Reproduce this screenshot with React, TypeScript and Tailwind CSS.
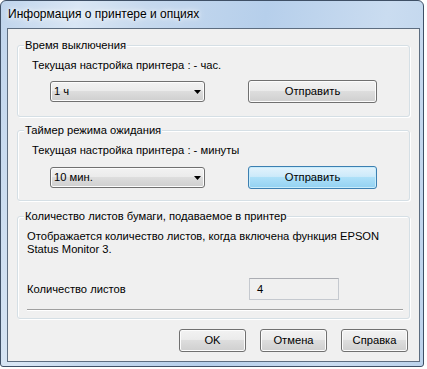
import React from "react";

const font = "font-['Liberation_Sans',Arial,sans-serif] text-[11.2px] text-black";

function Btn({ children, w, focused = false }: { children: React.ReactNode; w: string; focused?: boolean }) {
  const base =
    "h-[23px] rounded-[3px] border flex items-center justify-center leading-[13px] " + w + " ";
  const normal =
    "border-[#707070] bg-[linear-gradient(180deg,#f2f2f2_0%,#ebebeb_45%,#dddddd_50%,#cfcfcf_100%)] shadow-[inset_0_0_0_1px_#fcfcfc]";
  const blue =
    "border-[#3c7fb1] bg-[linear-gradient(180deg,#e3f3fc_0%,#cdeafa_45%,#ade0f8_50%,#93d1f2_100%)] shadow-[inset_0_0_0_1px_#c8ecfb]";
  return <div className={base + (focused ? blue : normal)}>{children}</div>;
}

function Combo({ value }: { value: string }) {
  return (
    <div className="w-[155px] h-[21px] rounded-[3px] border border-[#707070] bg-[linear-gradient(180deg,#f2f2f2_0%,#ebebeb_45%,#dddddd_50%,#cfcfcf_100%)] shadow-[inset_0_0_0_1px_#fcfcfc] flex items-center justify-between pl-[3px] pr-[3px]">
      <span className="leading-[13px]">{value}</span>
      <svg width="7" height="4" viewBox="0 0 7 4">
        <polygon points="0,0 7,0 3.5,4" fill="#000" />
      </svg>
    </div>
  );
}

function Group({
  label,
  h,
  children,
}: {
  label: string;
  h: string;
  children: React.ReactNode;
}) {
  return (
    <div
      className={
        "relative w-[393px] rounded-[3px] border border-[#d5dfe5] shadow-[inset_1px_1px_0_#ffffff,1px_1px_0_#ffffff] " +
        h
      }
    >
      <span className="absolute left-[6px] -top-[8px] px-[1px] bg-[#f0f0f0] leading-[14px] whitespace-nowrap">
        {label}
      </span>
      {children}
    </div>
  );
}

export default function App() {
  return (
    <div className={"w-[427px] h-[369px] bg-white " + font}>
      <div className="w-[424px] h-[367px] rounded-t-[6px] rounded-b-[3px] border border-[#3f5066] bg-[linear-gradient(100deg,#bfd4ec_0%,#d9e6f4_16%,#c6d9ee_30%,#b6cfeb_55%,#cadcf0_80%,#bcd3ec_100%)] pl-[6px] pr-[3px] pb-[4px] flex flex-col">
        <div className="h-[27px] flex items-center pl-[1px] pb-[1px]">
          <span className="font-['Liberation_Sans',Arial,sans-serif] text-[12px] text-black [text-shadow:0_0_8px_#ffffff,0_0_4px_#ffffff]">
            Информация о принтере и опциях
          </span>
        </div>
        <div className="flex-1 border border-[#5d6d80] bg-[#f0f0f0] flex flex-col">
          <div className="pl-[9px] pt-[16px] flex flex-col">
            <Group label="Время выключения" h="h-[72px]">
              <div className="pl-[14px] pt-[12px] leading-[14px]">Текущая настройка принтера : - час.</div>
              <div className="mt-[8px] pl-[32px] flex items-center gap-[43px]">
                <Combo value="1 ч" />
                <Btn w="w-[129px]">Отправить</Btn>
              </div>
            </Group>
            <div className="h-[13px]" />
            <Group label="Таймер режима ожидания" h="h-[71px]">
              <div className="pl-[14px] pt-[12px] leading-[14px]">Текущая настройка принтера : - минуты</div>
              <div className="mt-[9px] pl-[32px] flex items-center gap-[43px]">
                <Combo value="10 мин." />
                <Btn w="w-[129px]" focused>
                  Отправить
                </Btn>
              </div>
            </Group>
            <div className="h-[15px]" />
            <Group label="Количество листов бумаги, подаваемое в принтер" h="h-[103px]">
              <div className="pl-[9px] pt-[13px] leading-[13px]">
                Отображается количество листов, когда включена функция EPSON
                <br />
                Status Monitor 3.
              </div>
              <div className="mt-[22px] pl-[9px] flex items-center">
                <span className="w-[222px] leading-[13px]">Количество листов</span>
                <div className="w-[90px] h-[22px] border border-[#c5c9cf] border-t-[#abadb3] bg-[#f0f0f0] flex items-center pl-[7px] leading-[13px]">
                  4
                </div>
              </div>
              <div className="mt-[9px] ml-[9px] mr-[6px] border-t border-t-[#a0a0a0] border-b border-b-white" />
            </Group>
          </div>
          <div className="mt-[10px] pr-[11px] flex justify-end gap-[14px]">
            <Btn w="w-[67px]">OK</Btn>
            <Btn w="w-[67px]">Отмена</Btn>
            <Btn w="w-[67px]">Справка</Btn>
          </div>
        </div>
      </div>
    </div>
  );
}
